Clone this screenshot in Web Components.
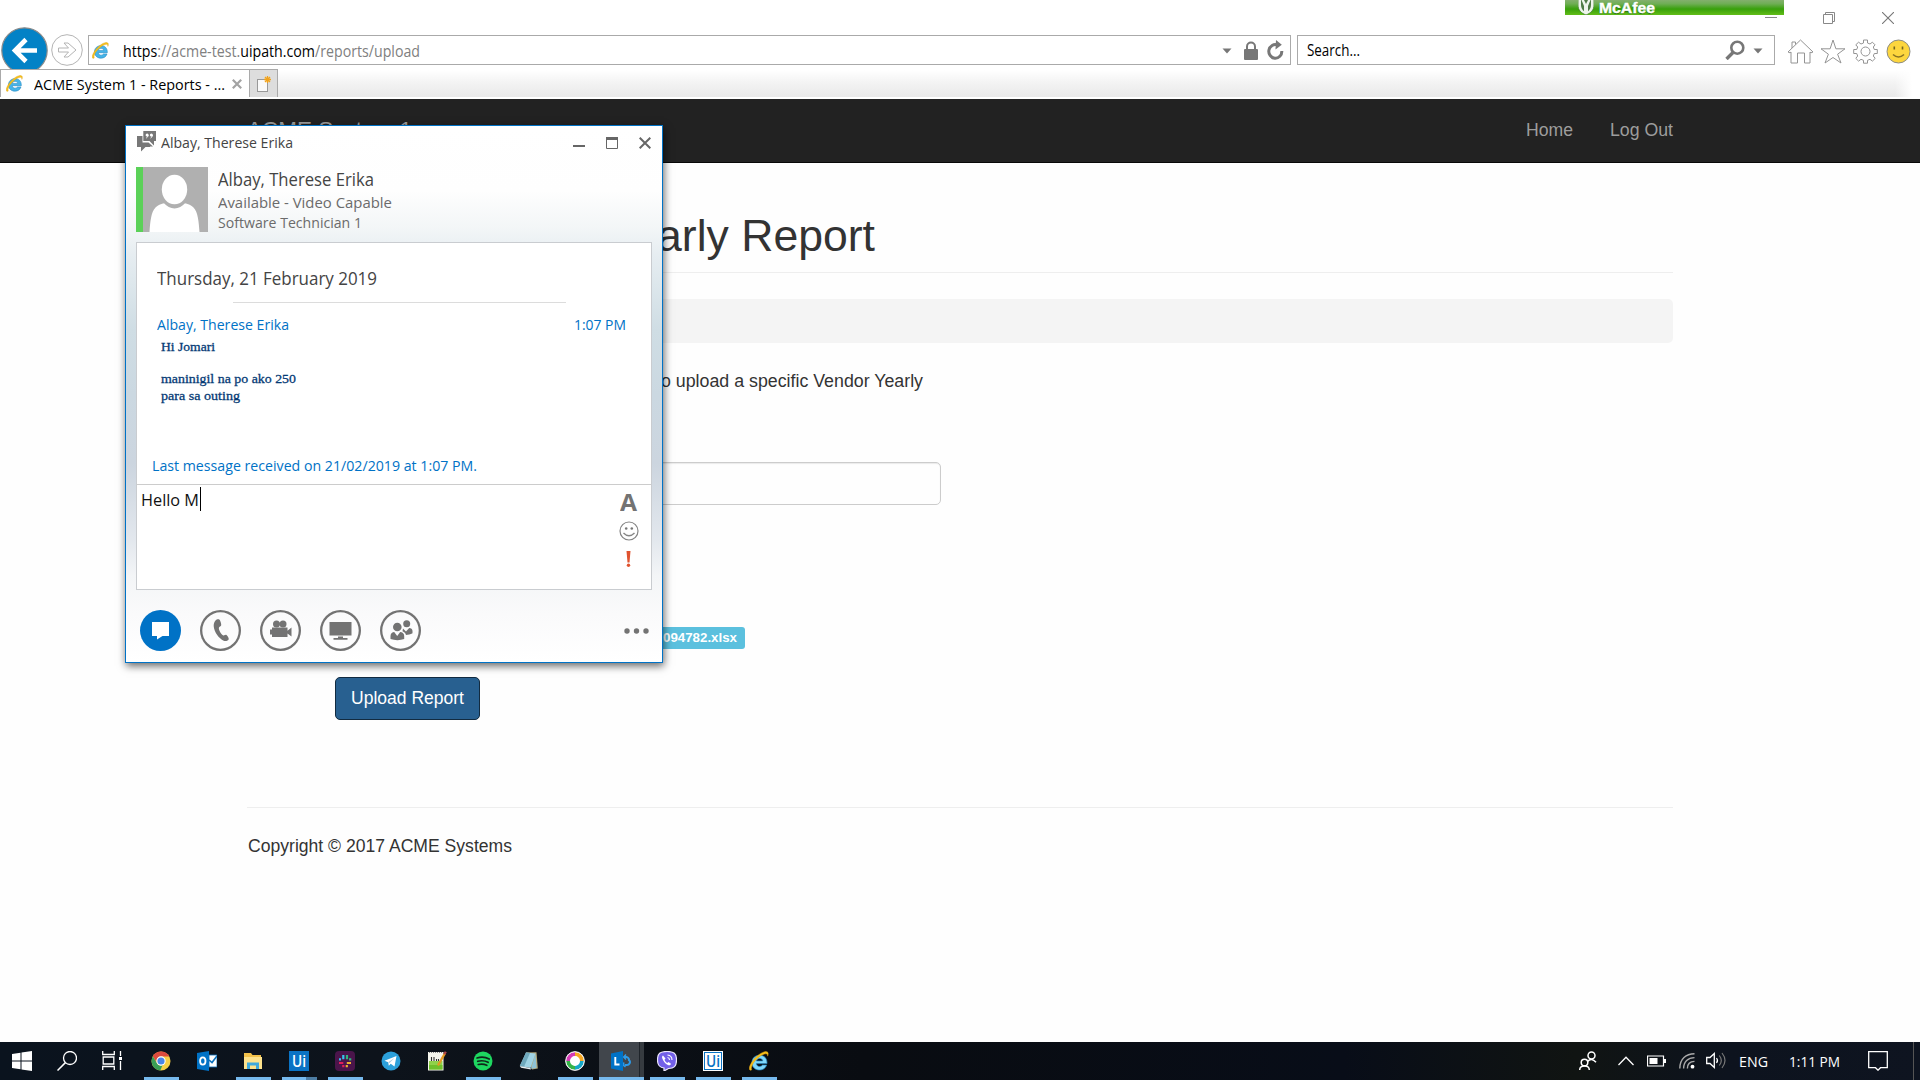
<!DOCTYPE html>
<html lang="en">
<head>
<meta charset="utf-8">
<title>ACME System 1 - Reports</title>
<style>
html,body{margin:0;padding:0;width:1920px;height:1080px;overflow:hidden;background:#fefefe}
</style>
</head>
<body>
<desktop-screen></desktop-screen>
<script>
const UI='"Open Sans","Noto Sans",sans-serif', WEB='"Liberation Sans",Arial,sans-serif';

const E=`<path d="M18.6 13H7.6c.2 2 1.600 3 3.300 3 1.300 0 2.300-.5 2.900-1.500h4.400C17 18 14.300 19.600 10.900 19.600 6.300 19.600 3 16.500 3 12s3.300-7.600 8-7.600 7.800 3.100 7.600 8.600zM7.700 10.200h6.500C14 8.600 12.800 7.700 11 7.700s-3 .9-3.300 2.500z" fill="#45b4e8" stroke="#2386c2" stroke-width=".7"/><path d="M2.800 19.300C.4 21-1 18.500 2 13 5 7.500 11 2 16 .8c3.500-.8 4.600 1.200 3.200 4.500.2-2-.8-3-3.200-2.200C11 4.500 5 10.500 3.200 15c-.9 2.300-1 3.600-.4 4.300z" fill="#f7c21c" stroke="#d99c10" stroke-width=".5"/>`;
const ICONS={
back:['47 47',`<circle cx="23.500" cy="23.500" r="22.700" fill="#0382c6" stroke="#8b8b8b" stroke-width="1.200"/><path d="M36 23.500H14M25 12.500 14 23.500 25 34.500" fill="none" stroke="#fff" stroke-width="4.600"/>`],
forward:['32 32',`<circle cx="16" cy="16" r="15.300" fill="#fff" stroke="#b4b4b4"/><path d="M7.500 14h10l-4.500-5h4l8 7-8 7h-4l4.500-5h-10z" fill="#fff" stroke="#b4b4b4"/>`],
ie:['20 20',`<g transform="scale(.97)">${E}</g>`],
down:['10 6',`<path d="M.5.5h9L5 5.500z" fill="#777"/>`],
lock:['14 19',`<path d="M3 9V5.500a4 4 0 0 1 8 0V9" fill="none" stroke="#777" stroke-width="2"/><rect y="8" width="14" height="11" rx="1" fill="#777"/>`],
refresh:['17 20',`<path d="M10.500 5A6.500 6.800 0 1 0 14.800 11" fill="none" stroke="#777" stroke-width="3"/><path d="M9 0l5.800 4.800L8.500 9.500z" fill="#777"/>`],
magnifier:['20 20',`<circle cx="12.300" cy="7.700" r="6" fill="none" stroke="#777" stroke-width="2.600"/><path d="M8 12.500 1.500 19" stroke="#777" stroke-width="3.400"/>`],
home:['27 25',`<path d="M1 13 13.500 1 26 13l-2 .8-1-.8v11h-5.500v-10h-7v10H4V13l-1 .8zM5 9V3h3.500v2.500" fill="none" stroke="#949494"/>`],
star:['26 25',`<path d="M13 1l2.900 8.800H25l-7.400 5.400L21 24l-8-5.500L5 24l3.400-8.800L1 9.800h9.100z" fill="none" stroke="#949494"/>`],
gear:['25 25',`<path d="M10.500 1h4v3l2.500 1 2.400-1.800 2.600 2.600L20.300 8l1 2.500h3v4h-3l-1 2.500 1.900 2.400-2.800 2.700-2.400-1.800-2.500 1v2.900h-4v-2.900l-2.500-1-2.400 1.800-2.800-2.700L4.700 17l-1-2.500h-3v-4h3l1-2.500-1.900-2.200 2.800-2.600L8 5l2.500-1z" fill="none" stroke="#949494"/><circle cx="12.500" cy="12.500" r="4.500" fill="none" stroke="#949494"/>`],
smile:['25 25',`<circle cx="12.500" cy="12.500" r="11.500" fill="#fdd63e" stroke="#8c8c86"/><path d="M8.300 7.500v3M16.500 7.500v3" stroke="#77671f" stroke-width="1.600"/><path d="M7 15.500q5.500 5 11 0" fill="none" stroke="#8b7423" stroke-width="1.600"/>`],
winmin:['12 12',`<path d="M0 5.500h12" stroke="#888"/>`],
winrestore:['12 12',`<path d="M.5 2.500h9v9h-9zM2.500 2.500v-2h9v9h-2" fill="none" stroke="#888"/>`],
winclose:['12 12',`<path d="M0 0l12 12M12 0 0 12" stroke="#777" stroke-width="1.100"/>`],
tabx:['10 10',`<path d="M.8.800l8.400 8.400M9.200.8.800 9.200" stroke="#a3a3a3" stroke-width="2.200"/>`],
newtab:['16 18',`<rect x="1.500" y="4.500" width="10" height="12" fill="#fafafa" stroke="#999"/><path d="M11.500 1v7M8 4.500h7M9 2l5 5M14 2 9 7" stroke="#f2a31b" stroke-width="1.300"/>`],
shield:['16 16',`<path d="M0-2h16v7c0 5-3 8-8 10C3 13 0 10 0 5z" fill="#eef5ec" stroke="#3c7c28" stroke-width=".8"/><path d="M3 0v5c0 3 1.500 5 3 6.200V6L3.500 0zM13 0v5c0 3-1.500 5-3 6.200V6l2.500-6zM6 0h4L8 4z" fill="#4e7b45"/>`],
chat:['19 21',`<path d="M0 5h5.500v6.500h6l4.500 4h-3v.5H8.500L4 20.500V16H0z" fill="#777"/><path d="M6.300 0H19v10h-2v4.500L12.500 10H6.300z" fill="#777"/><circle cx="10.100" cy="4" r="1.500" fill="#fff"/><circle cx="14.400" cy="4" r="1.500" fill="#fff"/><path d="M11.100 4q0 2-1.800 3M15.400 4q0 2-1.800 3" fill="none" stroke="#fff"/>`],
dmin:['12 12',`<path d="M0 9h12" stroke="#666" stroke-width="2"/>`],
dmax:['12 12',`<path d="M.5 1h11v10.500H.5z" fill="none" stroke="#666"/><path d="M0 1.500h12" stroke="#666" stroke-width="3"/>`],
dclose:['12 12',`<path d="M.7.700l10.600 10.600M11.300.7.700 11.300" stroke="#666" stroke-width="2"/>`],
avatar:['65 65',`<rect width="65" height="65" fill="#b0b0b0"/><path d="M6.500 65c.8-10 1.500-20 6-24.500 4-4 8-4 12-4.500h14c4 .5 8 .5 12 4.500 4.500 4.500 5.200 14.500 6 24.500z" fill="#fff"/><ellipse cx="31.500" cy="23" rx="15" ry="18.500" fill="#b0b0b0"/><ellipse cx="31.500" cy="22.500" rx="12.700" ry="14.700" fill="#fff"/>`],
face:['20 20',`<circle cx="10" cy="10" r="9" fill="none" stroke="#858585" stroke-width="1.200"/><circle cx="7.200" cy="7.500" r="1.300" fill="#777"/><circle cx="12.800" cy="7.500" r="1.300" fill="#777"/><path d="M4.500 12q5.500 5.500 11 0" fill="none" stroke="#858585" stroke-width="1.400"/>`],
bang:['5 16',`<path d="M.5 0h4L3.500 11.500h-2z" fill="#e0532f"/><circle cx="2.500" cy="14.200" r="1.700" fill="#e0532f"/>`],
im:['41 41',`<circle cx="20.500" cy="20.500" r="20.500" fill="#0072c6"/><path d="M12 12h17v14H22.500L17 29.500V26H12z" fill="#fff"/>`],
phone:['41 41',`<path d="M15.500 10.500c1-1.200 3-1.500 4-.8.800.6 2 4.300 1.700 5.500-.3 1-2 1.300-2.300 2.500-.4 2 2.300 6.500 4 7.500 1.300.7 2.300-.6 3.500-.3 1 .3 2.600 3.300 2.300 4.300-.4 1.300-2.800 2.300-5 1.500C19 28.500 14 22 13.700 16c-.1-2.200.8-4.400 1.800-5.500z" fill="#737373"/>`],
video:['41 41',`<circle cx="16.500" cy="14" r="3.500" fill="#737373"/><circle cx="23" cy="14" r="3.500" fill="#737373"/><path d="M12 17.500h15.500v3.200l4-3.200v9l-4-3v3.500H12v-2.500h-2v-5h2z" fill="#737373"/>`],
screen:['41 41',`<path d="M9.500 12h22v13.500h-22zM18 26.500h5v1.500h4.500v1.800h-14V28H18z" fill="#737373"/>`],
people:['41 41',`<circle cx="17.300" cy="17" r="4.300" fill="#737373"/><circle cx="26.700" cy="13.700" r="3.500" fill="#737373"/><path d="M10.500 29v-3c0-2.500 2-4 3.700-4l3 4 3-4c2 0 4 1.500 4 4v3c-4 1.500-9.500 1.500-13.700 0z" fill="#737373"/><path d="M23 18.500l3 3 3.200-3.500c1.800 0 3.300 1 3.300 3v2.200c-2 1.200-4.500 1.700-6.500 1.700-.5-1.700-1.500-3-3.500-3.700z" fill="#737373"/>`],
dots:['26 6',`<circle cx="3" cy="3" r="2.700" fill="#737373"/><circle cx="12.500" cy="3" r="2.700" fill="#737373"/><circle cx="22" cy="3" r="2.700" fill="#737373"/>`],
win:['20 20',`<path d="M0 3l8.500-1.300v7.800H0zM9.500 1.500 20 0v9.500H9.500zM0 10.500h8.500v7.800L0 17zM9.500 10.500H20V20L9.500 18.500z" fill="#fff"/>`],
tsearch:['20 20',`<circle cx="13" cy="7" r="6.500" fill="none" stroke="#fff" stroke-width="1.300"/><path d="M8.400 11.600.5 19.500" stroke="#fff" stroke-width="1.500"/>`],
tview:['20 20',`<path d="M.7 0v3.500h11.600V0M.7 19v-3.500h11.600V19M1.200 6h10.600v7H1.200zM18.500 0v5M18.500 10v9" fill="none" stroke="#fff" stroke-width="1.300"/><path d="M17 6h3v3h-3z" fill="#fff"/>`],
chrome:['20 20',`<circle cx="10" cy="10" r="9.500" fill="#f7cf45"/><path d="M1.800 5.200A9.500 9.500 0 0 1 18.300 5.500H10A4.500 4.500 0 0 0 5.800 11.500z" fill="#dc4b3e"/><path d="M1.800 5.200 6 12.300a4.500 4.500 0 0 0 5.500 2L9.300 19.500A9.500 9.500 0 0 1 1.800 5.200z" fill="#3a9f57"/><circle cx="10" cy="10" r="4.700" fill="#fff"/><circle cx="10" cy="10" r="3.600" fill="#4a86e8"/>`],
outlook:['20 20',`<path d="M0 2l12-2v20L0 18z" fill="#0072c6"/><path d="M12 4h8v12h-8z" fill="#fff" stroke="#0a70bd" stroke-width=".8"/><path d="M12 9l3 2.500L20 5" fill="none" stroke="#0a70bd" stroke-width="1.600"/><ellipse cx="5.800" cy="10" rx="2.700" ry="3.600" fill="none" stroke="#fff" stroke-width="1.800"/>`],
folder:['20 20',`<path d="M1 2h7l1.500 2H18v14H1z" fill="#f2c14a"/><path d="M1 6h18v12H1z" fill="#fde28c"/><path d="M4 18v-6.500h12V18h-3v-3.500H7V18z" fill="#3fa9dc"/>`],
slack:['20 20',`<rect width="20" height="20" rx="4" fill="#4a154b"/><path d="M8.300 4v4.300M4 8.300h2" stroke="#36c5f0" stroke-width="2.200"/><path d="M12 4v4.200M14 8.300h2.300" stroke="#2eb67d" stroke-width="2.200"/><path d="M4 12h4.300M8.300 14v2.300" stroke="#e01e5a" stroke-width="2.200"/><path d="M11.800 12H16M11.800 14v2.300" stroke="#ecb22e" stroke-width="2.200"/>`],
telegram:['20 20',`<circle cx="10" cy="10" r="9.500" fill="#2ca0da"/><path d="M3.500 9.800 15.500 5l-2 10.500-3.800-2.700-1.900 2-.6-3.500z" fill="#fff"/><path d="M7.200 11.200 13.500 7l-5 5z" fill="#a9c9dd"/>`],
npp:['20 20',`<path d="M1 1h15.500v18.500H1z" fill="#f6f6ee"/><path d="M2 10h13.500v8.500H2z" fill="#8fd14a"/><path d="M2 14h13.500v4.500H2z" fill="#6fc02c"/><path d="M2 1.500h13" stroke="#888" stroke-dasharray="1 1"/><path d="M4.500 6v4M7 6v4M9.500 8v2M11.500 8v2" stroke="#333" stroke-width="1.100"/><path d="M11 14.500 17.800 2.500" stroke="#e39a24" stroke-width="2.300"/><path d="M17.300 3.300l1.500-2.600" stroke="#b34747" stroke-width="2.300"/>`],
spotify:['20 20',`<circle cx="10" cy="10" r="9.500" fill="#1ed760"/><path d="M4 7q6.500-2 12.200 1M4.700 10.300q5.500-1.500 10.400 1M5.300 13.500q4.500-1.200 8.500.8" fill="none" stroke="#10251a" stroke-width="1.700" stroke-linecap="round"/>`],
notepad:['20 20',`<path d="M7 1.500 17.500 1.200l1.300 16.300L13 18.500z" fill="#b5a878"/><path d="M7 1.500 16.500 2.500 11.500 17 .8 15z" fill="#9fd3e4"/><path d="M7 1.500 11 2 5 15.800.8 15z" fill="#6fa9bd"/><path d="M.8 15 11.500 17l.5 1.500L2 16.800z" fill="#e8eef0"/><path d="M16.500 2.500l1 14.500-5.500.7z" fill="#8fc3d4"/>`],
webex:['20 20',`<circle cx="10" cy="10" r="9.500" fill="#fff"/><path d="M10 3a7 7 0 0 1 7 7" fill="none" stroke="#f7a823" stroke-width="4"/><path d="M17 10a7 7 0 0 1-7 7" fill="none" stroke="#17a7c7" stroke-width="4"/><path d="M10 17a7 7 0 0 1-7-7" fill="none" stroke="#35b348" stroke-width="4"/><path d="M3 10a7 7 0 0 1 7-7" fill="none" stroke="#d43bb5" stroke-width="4"/><circle cx="10" cy="10" r="4.400" fill="#fff"/><circle cx="10" cy="10" r="9.300" fill="none" stroke="#f4f4f4" stroke-width="1"/>`],
lync:['20 20',`<path d="M13 6h2.500a3 3 0 0 1 2.300 4M18.500 9.500a3 3 0 0 1-2.500 4.500H13.500" fill="none" stroke="#2d9bea" stroke-width="2"/><path d="M15 3.500 12.700 6 15 8.500M13 11.500l-1 2.500 2.500 2" fill="none" stroke="#2d9bea" stroke-width="1.500"/><path d="M0 2.500 12 0v20L0 17.500z" fill="#0072c6"/><path d="M4.300 6v7.500H8.500" fill="none" stroke="#fff" stroke-width="1.900"/>`],
viber:['20 20',`<path d="M10 .5c7 0 9.500 2 9.500 8.500s-2.500 8.300-8 8.500L7 20v-3C2 16.300.5 14 .5 9 .5 2.500 3 .5 10 .5z" fill="#7360e8" stroke="#eeeafc" stroke-width="1.200"/><path d="M6 4.500c-1.500 1-1 2.500 0 4.500 1.500 3 3.500 4.500 5.500 5.300 1.500.4 2.500-1 2.500-1.600l-2.500-1.700-1.300 1c-1.500-.8-2.200-1.800-2.700-3.200L8.500 7.500z" fill="#fff"/><path d="M10.500 4q4.500.5 4.500 5M10.500 6.500q2 .3 2 2.500" fill="none" stroke="#fff" stroke-width="1.100"/>`],
ietask:['20 20',`<g transform="scale(.97)">${E.replace('#45b4e8','#7fd8fb')}</g>`],
tpeople:['18 20',`<circle cx="12.500" cy="4.500" r="3.500" fill="none" stroke="#fff" stroke-width="1.500"/><path d="M8.500 10.500q4-4.500 8.500.8" fill="none" stroke="#fff" stroke-width="1.500"/><circle cx="5.500" cy="11.500" r="3.300" fill="none" stroke="#fff" stroke-width="1.500"/><path d="M.7 19q0-4 4.800-4t4.800 4" fill="none" stroke="#fff" stroke-width="1.500"/>`],
chev:['16 10',`<path d="M.5 9 8 1.200 15.500 9" fill="none" stroke="#fff" stroke-width="1.300"/>`],
battery:['19 12',`<path d="M.5 1h16v10H.5z" fill="none" stroke="#fff" stroke-width="1.200"/><path d="M2.500 3h8v6h-8zM17 4h2v4h-2z" fill="#fff"/>`],
wifi:['16 16',`<g fill="none" stroke="#aaa" stroke-width="1.400"><path d="M.8 15.500C.8 6 7 .8 15.500.8"/><path d="M4.600 15.500C4.600 8.500 9 4.600 15.500 4.600"/><path d="M8.400 15.500c0-4.500 2.600-7.100 7.100-7.100"/></g><circle cx="13.500" cy="13.700" r="1.900" fill="#fff"/>`],
vol:['20 19',`<path d="M.7 6.500H4l4.300-4v14l-4.300-4H.7z" fill="none" stroke="#fff" stroke-width="1.300"/><path d="M10.500 7q2 2.500 0 5" fill="none" stroke="#fff" stroke-width="1.200"/><path d="M13.300 4.500q4 5 0 10M16 2q6 7.500 0 15" fill="none" stroke="#777" stroke-width="1.200"/>`],
note:['20 20',`<path d="M.7.700h18.600v16H12.500L10 19.200 7.500 16.700H.7z" fill="none" stroke="#fff" stroke-width="1.300"/>`]
};

function define(name,css,html){
  customElements.define(name,class extends HTMLElement{
    constructor(){super();this.attachShadow({mode:'open'}).innerHTML=`<style>*{box-sizing:border-box}${css}</style>${html}`}
  });
}

/* An icon drawn from the table at the size of its view box, or at w x h. */
customElements.define('ui-icon',class extends HTMLElement{
  connectedCallback(){
    if(this.shadowRoot)return;
    const [vb,body]=ICONS[this.getAttribute('name')];
    const [w,h]=vb.split(' ');
    this.attachShadow({mode:'open'}).innerHTML=`<style>:host{display:block;flex:none}svg{display:block;overflow:hidden}</style><svg width="${this.getAttribute('w')||w}" height="${this.getAttribute('h')||h}" viewBox="0 0 ${vb}">${body}</svg>`;
  }
});

/* One line of text condensed or widened to the width w. */
customElements.define('fit-text',class extends HTMLElement{
  connectedCallback(){
    if(this.shadowRoot)return;
    const w=+this.getAttribute('w'),s=this.getAttribute('s'),l=this.getAttribute('l')||20;
    this.attachShadow({mode:'open'}).innerHTML=`<style>:host{display:block;flex:none;width:${w}px;height:${l}px;font-size:${s}px;line-height:${l}px;white-space:nowrap}span{display:inline-block;transform-origin:0 0}</style><span><slot></slot></span>`;
    const span=this.shadowRoot.querySelector('span');
    const n=span.getBoundingClientRect().width;
    if(n)span.style.transform=`scaleX(${w/n})`;
  }
});

define('mcafee-badge',`:host{display:flex;position:absolute;left:1565px;top:0;width:219px;height:15px;overflow:hidden;padding-left:13px;background:linear-gradient(#83b06d,#6fae55 25%,#38a00b 60%,#62bd18);font:bold 12px ${WEB};color:#fff;-webkit-text-stroke:.4px #fff}
fit-text{margin:-1px 0 0 5px;text-shadow:0 1px 1px #2a6a14}`,
`<ui-icon name="shield"></ui-icon><fit-text w="56" s="14.500" l="18">McAfee</fit-text>`);

define('browser-chrome',`:host{display:block;height:99px;background:#fff;font-family:${UI};color:#000}
.top{height:35px;display:flex;justify-content:flex-end;gap:47px;padding:12px 26px 0 0}
.bar{height:34px;display:flex;align-items:flex-start;overflow:visible}
.back{margin:-8px 0 0 1px;height:42px;overflow:hidden}.fwd{margin:-1px 5px 0 3px}
.box{height:30px;border:1px solid #aaa;display:flex;align-items:center;background:#fff}
.addr{width:1203px;padding-left:3px}.search{width:478px;margin-left:6px;padding-left:9px}
.g{color:#808080}
.tabs{display:flex;height:30px;border-bottom:2px solid #fff;background:linear-gradient(90deg,transparent 1895px,#fff 1912px),linear-gradient(#fff 5%,#f3f3f3 50%,#e9e9e9)}
.tab{width:250px;background:#fff;border:1px solid #aaa;border-bottom:0;display:flex;align-items:center;padding-left:5px}
.new{width:28px;background:#ddd;border:1px solid #aaa;border-left:0;border-bottom:0;padding:5px 0 0 6px}`,
`<div class="top"><ui-icon name="winmin" style="margin-right:-1px"></ui-icon><ui-icon name="winrestore"></ui-icon><ui-icon name="winclose"></ui-icon></div>
<div class="bar"><div class="back"><ui-icon name="back"></ui-icon></div><ui-icon class="fwd" name="forward"></ui-icon>
<div class="box addr"><ui-icon name="ie" w="17" h="17"></ui-icon><fit-text w="297" s="15.600" style="margin-left:14px;margin-top:1px">https<span class="g">://acme-test.</span>uipath.com<span class="g">/reports/upload</span></fit-text>
<ui-icon name="down" style="margin:2px 0 0 802px"></ui-icon><ui-icon name="lock" style="margin-left:12px"></ui-icon><ui-icon name="refresh" style="margin-left:9px"></ui-icon></div>
<div class="box search"><fit-text w="53" s="15.400" style="margin-top:1px">Search...</fit-text><ui-icon name="magnifier" style="margin-left:365px"></ui-icon><ui-icon name="down" style="margin:2px 0 0 8px"></ui-icon></div>
<div style="display:flex;gap:7px;margin:4px 0 0 12px"><ui-icon name="home"></ui-icon><ui-icon name="star" style="margin-left:-1px"></ui-icon><ui-icon name="gear"></ui-icon><ui-icon name="smile" style="margin-left:1px"></ui-icon></div></div>
<div class="tabs"><div class="tab"><ui-icon name="ie" w="17" h="17"></ui-icon><fit-text w="191" s="15" style="margin:0 7px 0 11px">ACME System 1 - Reports - ...</fit-text><ui-icon name="tabx"></ui-icon></div><div class="new"><ui-icon name="newtab"></ui-icon></div></div>`);

define('site-nav',`:host{display:flex;height:64px;background:#222;border-bottom:1px solid #080808;padding:0 247px;font-family:${WEB};color:#9d9d9d}`,
`<fit-text w="165" s="22.500" l="26" style="margin-top:18px">ACME System 1</fit-text><div style="display:flex;gap:37px;margin:19px 0 0 1114px"><fit-text w="47" s="17.500" l="25">Home</fit-text><fit-text w="63" s="17.500" l="25">Log Out</fit-text></div>`);

define('report-page',`:host{display:block;height:879px;padding:48px 247px 0 247px;box-sizing:border-box;font-family:${WEB};color:#333}
hr{border:0;height:1px;background:#eee;margin:0}
.crumb{height:44px;margin-top:26px;border-radius:5px;background:#f4f4f4}
.input{width:606px;height:43px;margin:68px 0 0 88px;border:1px solid #ccc;border-radius:5px;box-shadow:inset 0 1px 1px rgba(0,0,0,.08)}
.label{width:157px;height:22px;margin:122px 0 0 341px;background:#5bc0de;border-radius:3px;color:#fff;font-weight:bold;padding-left:72px}
.btn{width:145px;height:43px;margin:28px 0 87px 88px;background:#286090;border:1px solid #122b40;border-radius:5px;color:#fff;padding:8px 0 0 15px}`,
`<fit-text w="218" s="45" l="50" style="margin-left:410px">arly Report</fit-text><hr style="margin-top:11px">
<div class="crumb"></div>
<fit-text w="262" s="17.500" l="25" style="margin:26px 0 0 414px">o upload a specific Vendor Yearly</fit-text>
<div class="input"></div>
<div class="label"><fit-text w="74" s="13.100" l="21" style="margin-left:3px">094782.xlsx</fit-text></div>
<div class="btn"><fit-text w="113" s="17.500" l="25">Upload Report</fit-text></div>
<hr><fit-text w="264" s="17.500" l="25" style="margin:26px 0 0 .5px">Copyright © 2017 ACME Systems</fit-text>`);

define('round-button',`:host{display:block;width:41px;height:41px;border-radius:50%}:host([ring]){box-shadow:inset 0 0 0 2.300px #737373}`,`<slot></slot>`);

define('chat-window',`:host{box-sizing:border-box;position:absolute;left:125px;top:125px;width:538px;height:538px;border:1px solid #0072c6;padding:0 10px;display:flex;flex-direction:column;font-family:${UI};color:#444;
background:linear-gradient(#fff,#fefefe 12%,#f3f6f7 19%,#e6edf1 24%,#cfdde4 38%,#cbd8e1 50%,#ccd5df 63%,#e2e7ed 77%,#f3f5f7 84%,#fafafb 91%,#fff);box-shadow:1px 3px 8px rgba(0,0,0,.6)}
.title{display:flex;height:32px;padding-left:1px}
.contact{display:flex;height:65px;margin-top:9px}.contact>i{width:7px;background:#5bd158}
.sub{color:#6b6b6b}
.panel{margin-top:10px;height:348px;border:1px solid #c9ccd0;background:#fff;display:flex;flex-direction:column}
.log{height:241px;padding:23px 0 0 20px}
.log hr{border:0;margin:12px 0 11px 76px;height:1px;width:333px;background:#dcdcdc}
.blue{color:#0072c6;display:flex}
.msg{font-family:"Liberation Serif",serif;color:#053a75;-webkit-text-stroke:.3px #053a75;padding-left:4px}
.compose{display:flex;border-top:1px solid #ccc;height:105px;padding:2px 0 0 4px;color:#111}
.caret{width:1px;height:24px;background:#000;margin-left:1px}
.tools{margin-left:418px;width:19px;display:flex;flex-direction:column;align-items:center}
.actions{display:flex;gap:19px;padding:20px 0 0 4px}`,
`<div class="title"><ui-icon name="chat" style="margin-top:5px"></ui-icon><fit-text w="132" s="15.200" style="margin:6px 0 0 5px">Albay, Therese Erika</fit-text>
<div style="display:flex;gap:21px;margin:11px 0 0 280px"><ui-icon name="dmin"></ui-icon><ui-icon name="dmax"></ui-icon><ui-icon name="dclose"></ui-icon></div></div>
<div class="contact"><i></i><ui-icon name="avatar"></ui-icon><div style="margin:0 0 0 10px"><fit-text w="156" s="17.800" l="24" style="margin-bottom:1px">Albay, Therese Erika</fit-text><fit-text class="sub" w="174" s="15.200">Available - Video Capable</fit-text><fit-text class="sub" w="144" s="15.200">Software Technician 1</fit-text></div></div>
<div class="panel"><div class="log"><fit-text w="220" s="17.800" l="24">Thursday, 21 February 2019</fit-text><hr>
<div class="blue"><fit-text w="132" s="15.200">Albay, Therese Erika</fit-text><fit-text w="52" s="15.200" style="margin-left:285px">1:07 PM</fit-text></div>
<div class="msg"><fit-text w="54" s="13.500" l="16" style="margin:5px 0 16px">Hi Jomari</fit-text><fit-text w="135" s="13.500" l="16">maninigil na po ako 250</fit-text><fit-text w="79" s="13.500" l="16" style="margin-top:1px">para sa outing</fit-text></div>
<fit-text class="blue" w="325" s="15.200" style="margin:51px 0 0 -5px">Last message received on 21/02/2019 at 1:07 PM.</fit-text></div>
<div class="compose"><fit-text w="58" s="16.800" l="24" style="margin-top:1px">Hello M</fit-text><div class="caret"></div>
<div class="tools"><fit-text w="17" s="23" l="24" style="font-weight:bold;color:#737373;margin-top:3px">A</fit-text><ui-icon name="face" style="margin-top:7px"></ui-icon><ui-icon name="bang" style="margin-top:10px"></ui-icon></div></div></div>
<div class="actions"><round-button><ui-icon name="im"></ui-icon></round-button><round-button ring><ui-icon name="phone"></ui-icon></round-button><round-button ring><ui-icon name="video"></ui-icon></round-button><round-button ring><ui-icon name="screen"></ui-icon></round-button><round-button ring><ui-icon name="people"></ui-icon></round-button><ui-icon name="dots" style="margin:18px 0 0 184px"></ui-icon></div>`);

define('task-item',`:host{box-sizing:border-box;display:flex;flex-direction:column;align-items:center;width:46px;height:38px;padding-top:9px;flex:none}
.b{height:20px}.u{display:none;width:35px;height:3px;margin:6px 0 0 1px;background:#76b9ed}
:host([open]) .u{display:block}:host([multi]) .u{background:linear-gradient(90deg,#76b9ed 24px,#4d7da3 24px)}
:host([active]){background:linear-gradient(90deg,transparent 1px,#41464c 1px 41px,#1f242a 41px 42px,#363b40 42px)}:host([active]) .u{width:45px}`,
`<div class="b"><slot></slot></div><div class="u"></div>`);

define('ui-tile',`:host{display:flex;justify-content:center;width:20px;height:20px;background:#0a73c4;color:#fff;font:600 15px ${UI};border:1px solid #0a73c4;box-sizing:border-box}:host([light]){background:#fff;color:#0a73c4;border-color:#fff;box-shadow:inset 0 0 0 1px #0a73c4}`,`<fit-text w="14" s="16" l="18">Ui</fit-text>`);

define('task-bar',`:host{display:flex;height:38px;background:linear-gradient(90deg,#0a131e,#0d131b 20%,#090c11 45%,#080d18 70%,#101412 82%,#0d131e 90%,#0e1420);font-family:${UI};color:#fff}
.start task-item{width:45px;padding-right:1px}.start{display:flex;margin-right:3px}
.tray{display:flex;margin-left:auto;width:342px;align-items:flex-start}
`,
`<div class="start"><task-item><ui-icon name="win"></ui-icon></task-item><task-item><ui-icon name="tsearch"></ui-icon></task-item><task-item><ui-icon name="tview"></ui-icon></task-item></div>
<task-item open><ui-icon name="chrome"></ui-icon></task-item><task-item><ui-icon name="outlook"></ui-icon></task-item><task-item open><ui-icon name="folder"></ui-icon></task-item><task-item open multi><ui-tile></ui-tile></task-item><task-item open><ui-icon name="slack"></ui-icon></task-item><task-item><ui-icon name="telegram"></ui-icon></task-item><task-item><ui-icon name="npp"></ui-icon></task-item><task-item open><ui-icon name="spotify"></ui-icon></task-item><task-item><ui-icon name="notepad"></ui-icon></task-item><task-item open><ui-icon name="webex"></ui-icon></task-item><task-item open active><ui-icon name="lync"></ui-icon></task-item><task-item open><ui-icon name="viber"></ui-icon></task-item><task-item open><ui-tile light></ui-tile></task-item><task-item open><ui-icon name="ietask"></ui-icon></task-item>
<div class="tray"><ui-icon name="tpeople" style="margin:9px 0 0 1px"></ui-icon><ui-icon name="chev" style="margin:14px 0 0 21px"></ui-icon><ui-icon name="battery" style="margin:13px 0 0 13px"></ui-icon><ui-icon name="wifi" style="margin:11px 0 0 13px"></ui-icon><ui-icon name="vol" style="margin:9px 0 0 11px"></ui-icon><fit-text w="29" s="15.200" style="margin:9px 0 0 13px">ENG</fit-text><fit-text w="51" s="15.200" style="margin:9px 0 0 21px">1:11 PM</fit-text><ui-icon name="note" style="margin:9px 0 0 28px"></ui-icon><div style="width:1px;height:38px;background:#555;margin-left:25px"></div></div>`);

define('desktop-screen',`:host{display:block;position:relative;width:1920px;height:1080px;overflow:hidden}
site-nav{box-sizing:border-box}`,
`<browser-chrome></browser-chrome><site-nav></site-nav><report-page></report-page><task-bar></task-bar><chat-window></chat-window><mcafee-badge></mcafee-badge>`);
</script>
</body>
</html>
